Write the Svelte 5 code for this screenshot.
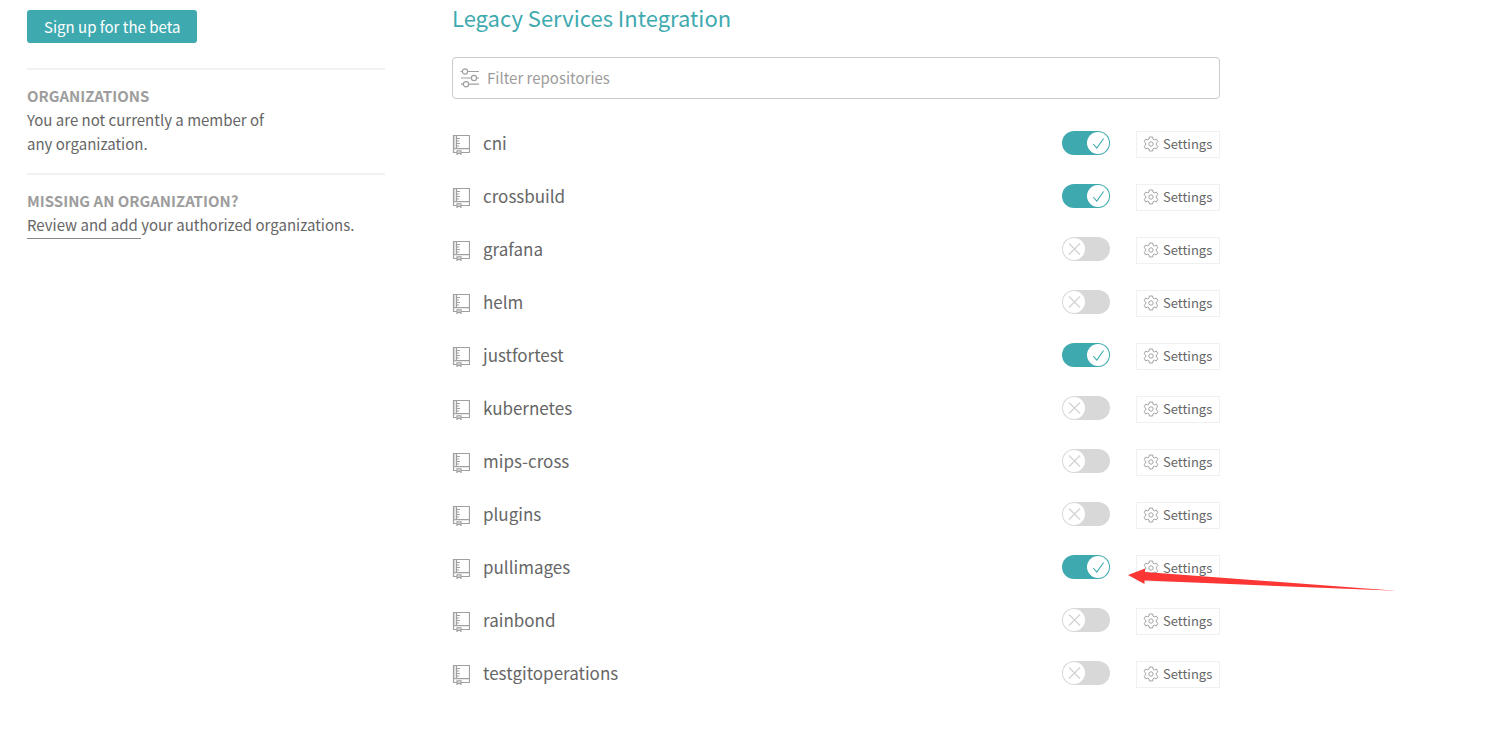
<script>
  let repos = $state([
    { name: 'cni', on: true },
    { name: 'crossbuild', on: true },
    { name: 'grafana', on: false },
    { name: 'helm', on: false },
    { name: 'justfortest', on: true },
    { name: 'kubernetes', on: false },
    { name: 'mips-cross', on: false },
    { name: 'plugins', on: false },
    { name: 'pullimages', on: true, marked: true },
    { name: 'rainbond', on: false },
    { name: 'testgitoperations', on: false }
  ]);
  let filter = $state('');
  const shown = $derived(repos.filter((r) => r.name.includes(filter.trim().toLowerCase())));
</script>

<div class="page">
  <aside>
    <button class="beta" type="button">Sign up for the beta</button>
    <section>
      <h2>Organizations</h2>
      <p class="narrow">You are not currently a member of any organization.</p>
    </section>
    <section>
      <h2>Missing an organization?</h2>
      <p><a href="#review">{'Review and add '}</a>your authorized organizations.</p>
    </section>
  </aside>

  <main>
    <h1>Legacy Services Integration</h1>
    <label class="filter">
      <svg width="20" height="20" viewBox="0 0 20 20" fill="none" stroke="#a0a0a0" stroke-width="1.2" aria-hidden="true">
        <circle cx="5" cy="3.5" r="2.6" />
        <path d="M0.5 3.5h1.9M7.6 3.5H19M1 10h10.4M16.6 10H19M1 16.2h2.4M8.6 16.2H19" />
        <circle cx="14" cy="10" r="2.6" />
        <circle cx="6" cy="16.2" r="2.6" />
      </svg>
      <input type="text" aria-label="Filter repositories" placeholder="Filter repositories" bind:value={filter} />
    </label>

    <ul>
      {#each shown as repo (repo.name)}
        <li>
          <svg class="book" width="18" height="20" viewBox="0 0 18 20" fill="none" stroke="#a0a0a0" aria-hidden="true">
            <path d="M5 17.5H1.5V.5h16v17H9M4.5 .5v13M1.5 13.7h16" stroke-width="1.2" />
            <path d="M2.8 1v12.5" stroke="#ccc" />
            <path d="M5 3.5h3M5 6h2.2M5 8.5h3M5 11h2.2" />
            <path d="M5 15.8h4v3.6l-2-1.6-2 1.6z" stroke-width="1.2" />
          </svg>
          <span class="name">{repo.name}</span>
          <label class="switch">
            <input type="checkbox" aria-label={`Build ${repo.name}`} bind:checked={repo.on} />
            <svg class="knob" width="22" height="22" viewBox="0 0 22 22" fill="none" aria-hidden="true">
              <circle cx="11" cy="11" r="11" fill="#fff" />
              {#if repo.on}
                <path d="M6.2 12l3.6 4 6.8-9.5" stroke="#3eaaaf" stroke-width="1.1" />
              {:else}
                <path d="M6 5.5l11 11M17 5.5l-11 11" stroke="#d2d2d2" stroke-width="1.2" />
              {/if}
            </svg>
          </label>
          <button class="settings" type="button">
            <svg width="16" height="16" viewBox="0 0 16 16" fill="none" stroke="#a3a3a3" stroke-linejoin="round" aria-hidden="true">
              <path d="M6.4 1h3.2l.4 2.1 1.3.8 2.1-.8 1.5 2.6L13.3 7v2l1.6 1.3-1.5 2.6-2.1-.8-1.3.8-.4 2.1H6.4L6 12.9l-1.3-.8-2.1.8-1.5-2.6L2.7 9V7L1.1 5.7l1.5-2.6 2.1.8L6 3.1z" />
              <circle cx="8" cy="8" r="2.2" />
            </svg>
            Settings
          </button>
          {#if repo.marked}
            <svg class="arrow" width="268" height="24" viewBox="0 0 268 24" aria-hidden="true">
              <path d="M0 7L17 .5V4L268 22.8 16.5 12.5V16z" fill="#fb3634" />
            </svg>
          {/if}
        </li>
      {/each}
    </ul>
  </main>
</div>

<style>
  :global(body) {
    margin: 0;
    background: #fff;
  }
  .page {
    display: grid;
    grid-template-columns: minmax(0, 358px) minmax(0, 768px);
    column-gap: 67px;
    padding: 0 27px;
    font-family: "Noto Sans CJK SC", "Open Sans", sans-serif;
    font-size: 15px;
    line-height: 24px;
    color: #666;
  }
  button,
  input {
    font: inherit;
    color: inherit;
    margin: 0;
    box-sizing: border-box;
  }
  aside {
    padding-top: 10px;
  }
  .beta {
    display: block;
    height: 33px;
    padding: 0 17px;
    margin-bottom: 25px;
    border: 0;
    border-radius: 3px;
    background: #3eaaaf;
    color: #fff;
  }
  section {
    border-top: 2px solid #f1f1f1;
    padding: 14px 0 17px;
  }
  h2 {
    margin: 0;
    font-size: 15px;
    line-height: 24px;
    font-weight: 700;
    text-transform: uppercase;
    color: #9d9d9d;
  }
  p {
    margin: 0;
  }
  .narrow {
    max-width: 250px;
  }
  a {
    padding-bottom: 3px;
    border-bottom: 1px solid #888;
    color: inherit;
    text-decoration: none;
    white-space: pre-wrap;
  }
  main {
    padding-top: 1px;
  }
  h1 {
    margin: 0 0 24px;
    font-size: 22px;
    line-height: 32px;
    font-weight: 400;
    color: #3eaaaf;
  }
  .filter {
    display: flex;
    align-items: center;
    gap: 7px;
    height: 42px;
    box-sizing: border-box;
    padding: 0 7px;
    border: 1px solid #cbcbcb;
    border-radius: 4px;
  }
  .filter input {
    flex: 1;
    min-width: 0;
    border: 0;
    padding: 0;
    outline: 0;
    background: none;
  }
  .filter input::placeholder {
    color: #9c9c9c;
    opacity: 1;
  }
  ul {
    list-style: none;
    margin: 17px 0 0;
    padding: 0;
  }
  li {
    position: relative;
    display: flex;
    align-items: center;
    height: 53px;
  }
  .book {
    margin: 4px 13px 0 0;
  }
  .name {
    flex: 1;
    font-size: 17px;
  }
  .switch {
    display: grid;
    margin-right: 26px;
    cursor: pointer;
  }
  .switch input,
  .knob {
    grid-area: 1 / 1;
  }
  .switch input {
    appearance: none;
    width: 48px;
    height: 24px;
    border-radius: 12px;
    background: #d8d8d8;
  }
  .switch input:checked {
    background: #3eaaaf;
  }
  .knob {
    margin: 1px;
    pointer-events: none;
  }
  .switch input:checked + .knob {
    justify-self: end;
  }
  .settings {
    display: flex;
    align-items: center;
    gap: 4px;
    width: 84px;
    height: 27px;
    margin-top: 3px;
    padding: 0 6px;
    border: 1px solid #f0f0f0;
    background: #fff;
    font-size: 13px;
  }
  .arrow {
    position: absolute;
    top: 28px;
    left: calc(100% - 92px);
    pointer-events: none;
  }
</style>
